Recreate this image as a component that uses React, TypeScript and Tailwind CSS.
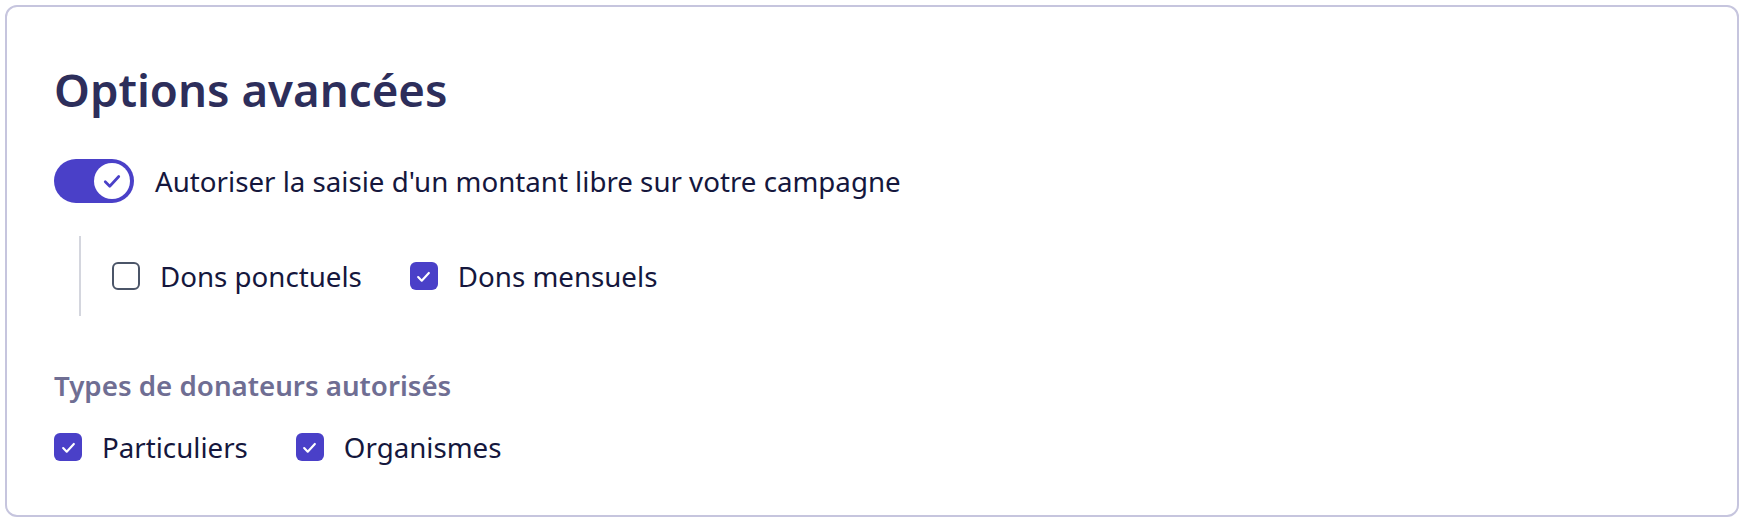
import React, { useState } from "react";

const PURPLE = "bg-[#4a40c8]";

function CheckIcon({ className }: { className?: string }) {
  return (
    <svg viewBox="0 0 16 16" fill="none" className={className}>
      <path
        d="M3.5 8.5l3 3 6-6.5"
        stroke="currentColor"
        strokeWidth="1.8"
        strokeLinecap="round"
        strokeLinejoin="round"
      />
    </svg>
  );
}

function Checkbox({
  label,
  checked,
  onChange,
}: {
  label: string;
  checked: boolean;
  onChange: (value: boolean) => void;
}) {
  return (
    <label className="flex cursor-pointer items-center gap-5">
      <button
        type="button"
        onClick={() => onChange(!checked)}
        className={
          checked
            ? `flex h-7 w-7 items-center justify-center rounded-md ${PURPLE} text-white`
            : "flex h-7 w-7 items-center justify-center rounded-md border-2 border-[#4b5568] bg-white"
        }
      >
        {checked && <CheckIcon className="h-[19px] w-[19px]" />}
      </button>
      <span className="text-[27.7px] leading-[40px] text-[#15173d]">{label}</span>
    </label>
  );
}

function Toggle({ on, onChange }: { on: boolean; onChange: (value: boolean) => void }) {
  return (
    <button
      type="button"
      onClick={() => onChange(!on)}
      className={
        on
          ? `flex h-[44px] w-[80px] shrink-0 items-center justify-end rounded-full ${PURPLE} p-1`
          : "flex h-[44px] w-[80px] shrink-0 items-center justify-start rounded-full bg-[#c6c5de] p-1"
      }
    >
      <span className="flex h-9 w-9 items-center justify-center rounded-full bg-white text-[#4a40c8]">
        {on && <CheckIcon className="h-[24px] w-[24px]" />}
      </span>
    </button>
  );
}

export default function App() {
  const [freeAmount, setFreeAmount] = useState(true);
  const [oneOff, setOneOff] = useState(false);
  const [monthly, setMonthly] = useState(true);
  const [individuals, setIndividuals] = useState(true);
  const [organisations, setOrganisations] = useState(true);

  return (
    <div className="bg-white p-[5px] font-['Noto_Sans',sans-serif]">
      <div className="rounded-xl border-2 border-[#c6c5de] bg-white px-[47px] pt-[54px] pb-[48px]">
        <h2 className="text-[45.6px] font-semibold leading-[56px] text-[#2d2e5b]">Options avancées</h2>

        <div className="mt-[42px] flex h-[44px] items-center gap-[21px]">
          <Toggle on={freeAmount} onChange={setFreeAmount} />
          <span className="text-[27.7px] leading-[40px] text-[#15173d]">
            Autoriser la saisie d'un montant libre sur votre campagne
          </span>
        </div>

        <div className="ml-[25px] mt-[33px] border-l-2 border-[#d4d6de] py-5 pl-[31px]">
          <div className="flex items-center gap-12">
            <Checkbox label="Dons ponctuels" checked={oneOff} onChange={setOneOff} />
            <Checkbox label="Dons mensuels" checked={monthly} onChange={setMonthly} />
          </div>
        </div>

        <p className="mt-[50px] text-[27.7px] font-semibold leading-[38px] text-[#6f6e93]">
          Types de donateurs autorisés
        </p>

        <div className="mt-[23px] flex items-center gap-12">
          <Checkbox label="Particuliers" checked={individuals} onChange={setIndividuals} />
          <Checkbox label="Organismes" checked={organisations} onChange={setOrganisations} />
        </div>
      </div>
    </div>
  );
}
